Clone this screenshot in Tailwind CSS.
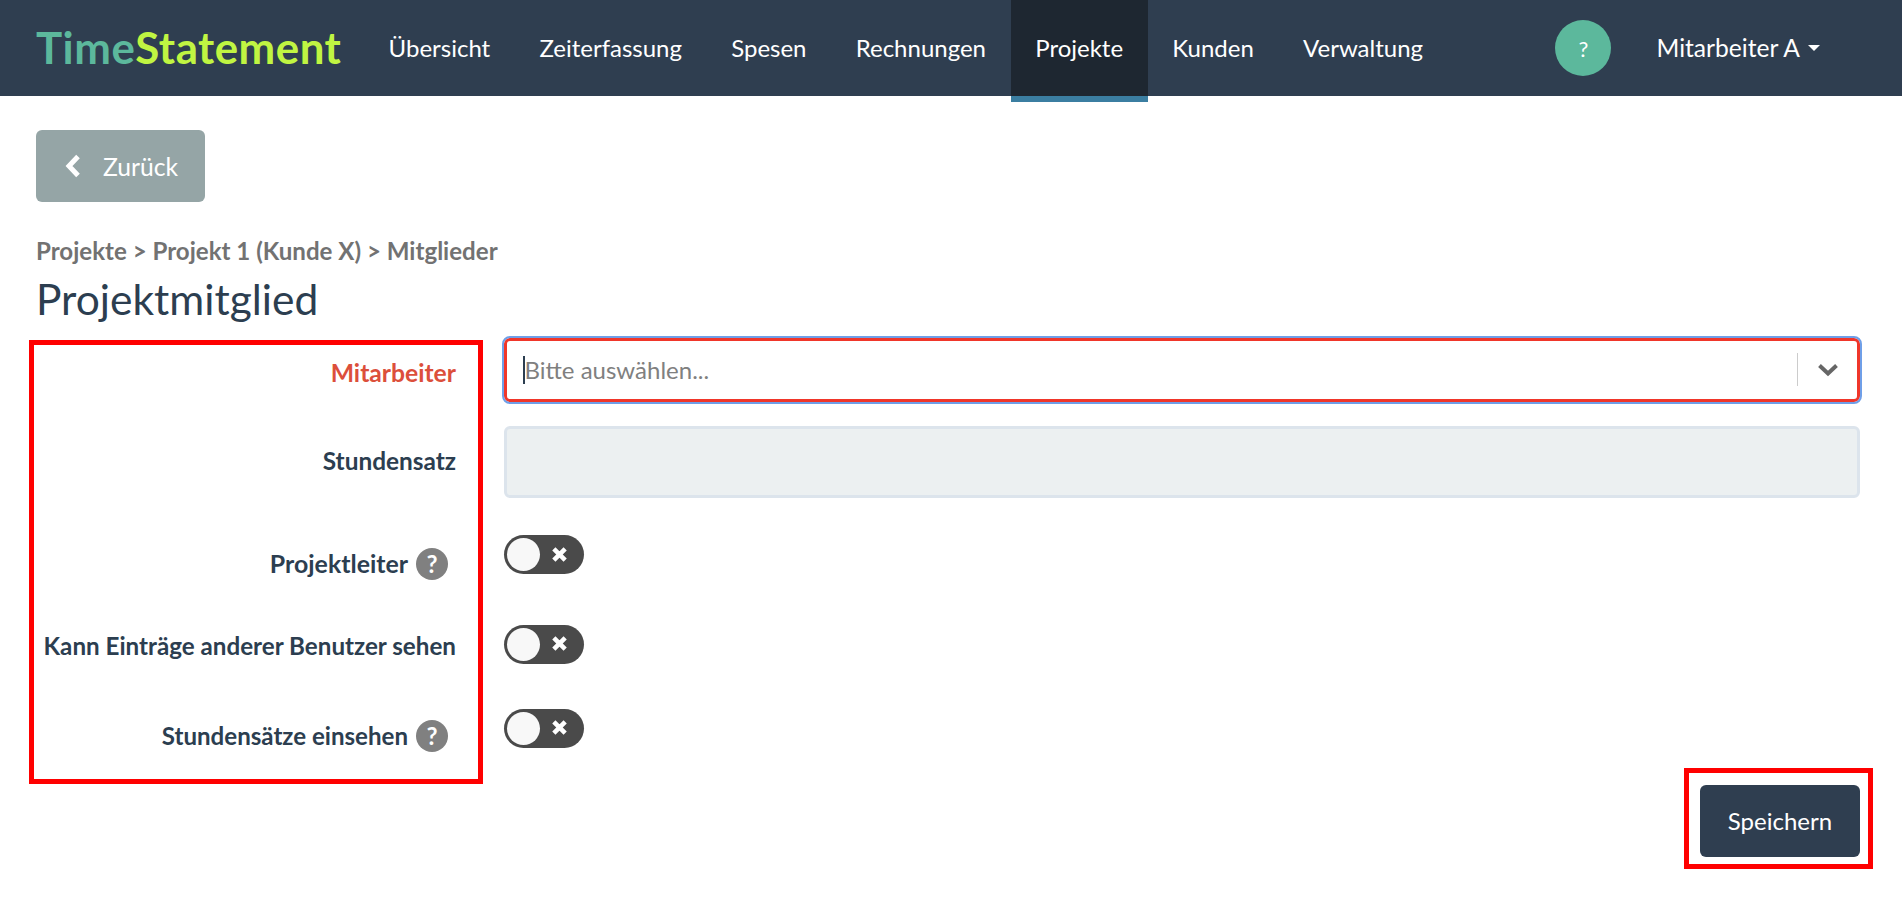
<!DOCTYPE html>
<html lang="de">
<head>
<meta charset="utf-8">
<title>TimeStatement</title>
<script src="https://cdn.jsdelivr.net/npm/@tailwindcss/browser@4"></script>
</head>
<body class="bg-white font-['Lato',sans-serif] text-[24px] text-[#2c3e50] overflow-hidden">
<div class="relative w-[1902px] h-[906px]">
  <header class="flex items-start h-[96px] bg-[#2f3e50] text-white pl-[36px] text-[24px]">
    <a class="w-[328px] h-[96px] flex items-center text-[43.8px] font-bold tracking-[0.5px] leading-none"><span class="text-[#5cb89c]">Time</span><span class="text-[#c0f542]">Statement</span></a>
    <nav class="flex items-start">
      <a class="h-[96px] px-[24.6px] flex items-center">Übersicht</a>
      <a class="h-[96px] px-[24.6px] flex items-center">Zeiterfassung</a>
      <a class="h-[96px] px-[24.6px] flex items-center">Spesen</a>
      <a class="h-[96px] px-[24.6px] flex items-center">Rechnungen</a>
      <a class="h-[102px] px-[24.6px] flex items-center bg-[#1e2731] border-b-[6px] border-[#3b7ea1]">Projekte</a>
      <a class="h-[96px] px-[24.6px] flex items-center">Kunden</a>
      <a class="h-[96px] px-[24.6px] flex items-center">Verwaltung</a>
    </nav>
    <div class="ml-auto flex items-center h-[96px] pr-[82px]">
      <span class="w-[56px] h-[56px] rounded-full bg-[#5cb89c] flex items-center justify-center text-[22px]">?</span>
      <a class="ml-[45px] flex items-center text-[24.6px]">Mitarbeiter A<span class="ml-[8px] w-0 h-0 border-x-[6px] border-x-transparent border-t-[6px] border-t-white"></span></a>
    </div>
  </header>

  <main class="pl-[36px] pr-[42px] pt-[34px]">
    <a class="w-[169px] h-[72px] rounded-[6px] bg-[#95a5a6] text-white flex items-center pl-[29px] text-[24.7px]">
      <svg class="w-[16px] h-[24px] mr-[22px]" viewBox="0 0 16 24"><path d="M13 2.5 4 12l9 9.5" fill="none" stroke="#fff" stroke-width="5"/></svg>
      <span class="pt-[2px]">Zurück</span>
    </a>
    <p class="mt-[35px] font-bold text-[#727272] leading-[28px] text-[24.1px]">Projekte &gt; Projekt 1 (Kunde X) &gt; Mitglieder</p>
    <h1 class="mt-[9px] text-[42.5px] leading-[50px] font-normal">Projektmitglied</h1>

    <form class="mt-[14px]">
      <div class="flex h-[88px]">
        <label class="w-[420px] text-right font-bold text-[24.7px] text-[#dc4f3b] pt-[21px] leading-[28px]">Mitarbeiter</label>
        <div class="ml-[48px] flex-1 h-[64px] border-[3px] border-[#f0362a] rounded-[6px] outline-[2px] outline-[#6f9fe8] flex items-center pl-[16px] bg-white relative">
          <span class="w-[1.5px] h-[28px] bg-[#2c3e50]"></span>
          <span class="text-[#808080]">Bitte auswählen...</span>
          <span class="absolute right-[59px] top-[12px] w-[1px] h-[33px] bg-[#cccccc]"></span>
          <svg class="absolute right-[19px] top-[22px] w-[20px] h-[14px]" viewBox="0 0 20 14"><path d="M1.5 2.5 10 10.5l8.5-8" fill="none" stroke="#666" stroke-width="4"/></svg>
        </div>
      </div>
      <div class="flex h-[96px]">
        <label class="w-[420px] text-right font-bold text-[24.4px] pt-[21px] leading-[28px]">Stundensatz</label>
        <div class="ml-[48px] flex-1 h-[72px] border-[3px] border-[#dce4ec] rounded-[6px] bg-[#ecf0f1]"></div>
      </div>
      <div class="flex h-[88px]">
        <div class="w-[420px] flex justify-end items-center h-[32px] mt-[26px] pr-[8px] font-bold gap-[8px]">
          <label class="text-[24.9px]">Projektleiter</label>
          <span class="w-[32px] h-[32px] rounded-full bg-[#808080] text-white flex items-center justify-center text-[24px]">?</span>
        </div>
        <div class="ml-[48px] mt-[13px] relative w-[80px] h-[39px] rounded-full bg-[#4a4a4a]">
          <span class="absolute left-[3px] top-[3px] w-[33px] h-[33px] rounded-full bg-[#f8f8f8]"></span>
          <svg class="absolute left-[47px] top-[11px] w-[17px] h-[17px]" viewBox="0 0 15 15"><path d="M2.5 2.5l10 10m0-10-10 10" stroke="#fff" stroke-width="4"/></svg>
        </div>
      </div>
      <div class="flex h-[86px]">
        <div class="w-[420px] flex justify-end items-center h-[32px] mt-[20px] font-bold">
          <label class="text-[24.2px]">Kann Einträge anderer Benutzer sehen</label>
        </div>
        <div class="ml-[48px] mt-[15px] relative w-[80px] h-[39px] rounded-full bg-[#4a4a4a]">
          <span class="absolute left-[3px] top-[3px] w-[33px] h-[33px] rounded-full bg-[#f8f8f8]"></span>
          <svg class="absolute left-[47px] top-[10px] w-[17px] h-[17px]" viewBox="0 0 15 15"><path d="M2.5 2.5l10 10m0-10-10 10" stroke="#fff" stroke-width="4"/></svg>
        </div>
      </div>
      <div class="flex h-[75px]">
        <div class="w-[420px] flex justify-end items-center h-[32px] mt-[24px] pr-[8px] font-bold gap-[8px]">
          <label class="text-[24.1px]">Stundensätze einsehen</label>
          <span class="w-[32px] h-[32px] rounded-full bg-[#808080] text-white flex items-center justify-center text-[24px]">?</span>
        </div>
        <div class="ml-[48px] mt-[13px] relative w-[80px] h-[39px] rounded-full bg-[#4a4a4a]">
          <span class="absolute left-[3px] top-[3px] w-[33px] h-[33px] rounded-full bg-[#f8f8f8]"></span>
          <svg class="absolute left-[47px] top-[10px] w-[17px] h-[17px]" viewBox="0 0 15 15"><path d="M2.5 2.5l10 10m0-10-10 10" stroke="#fff" stroke-width="4"/></svg>
        </div>
      </div>
      <div class="flex justify-end mt-[14px]">
        <button class="w-[160px] h-[72px] rounded-[6px] bg-[#2f3e50] text-white">Speichern</button>
      </div>
    </form>
  </main>

  <div class="absolute left-[29px] top-[340px] w-[454px] h-[444px] border-[5px] border-[#ff0000] pointer-events-none"></div>
  <div class="absolute left-[1684px] top-[768px] w-[189px] h-[101px] border-[5px] border-[#ff0000] pointer-events-none"></div>
</div>
</body>
</html>
